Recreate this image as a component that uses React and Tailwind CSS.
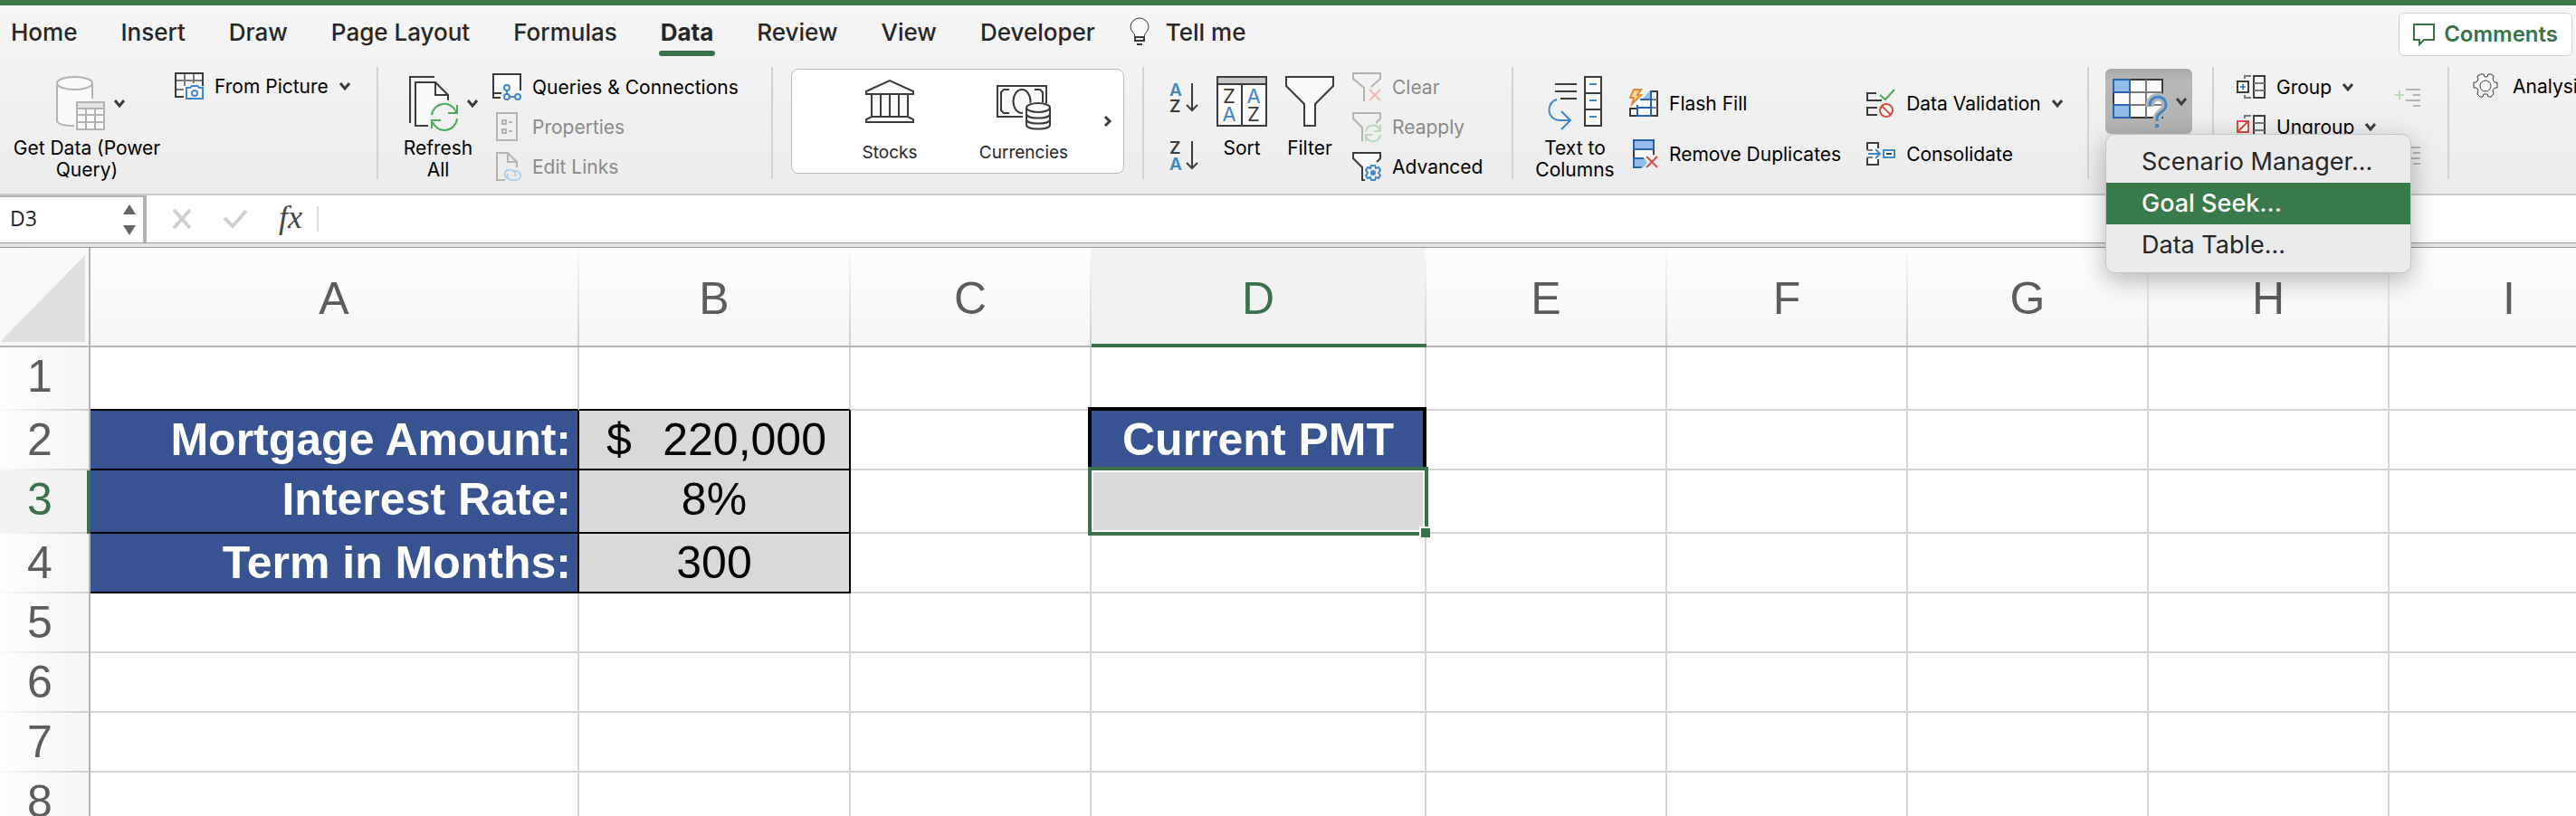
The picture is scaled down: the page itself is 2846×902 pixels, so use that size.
import React from "react";

const INK = "#3b3b3b";
const BLUE = "#3f87c9";
const DEEP = "#2a62ad";
const SKY = "#92bde8";
const GREEN = "#4fa85c";
const RED = "#d94c44";
const MUTE = "#b3b3b1";
const PAPER = "#fafafa";

function Svg({ w, h, children, stroke = INK, className = "" }) {
  return (
    <svg
      width={w}
      height={h}
      viewBox={`0 0 ${w} ${h}`}
      fill="none"
      stroke={stroke}
      strokeWidth="2"
      aria-hidden="true"
      className={`block shrink-0 overflow-visible ${className}`}
    >
      {children}
    </svg>
  );
}

function Chevron() {
  return (
    <Svg w={12} h={10}>
      <path d="M1 2l5 6 5-6" strokeWidth="3" />
    </Svg>
  );
}

/* ---------- icons ---------- */

const DatabaseIcon = () => (
  <Svg w={54} h={60} stroke={MUTE}>
    <path d="M1 8v41c0 4 8 6 19 6h2V28h18V8z" fill={PAPER} stroke="none" />
    <ellipse cx="20.500" cy="8" rx="19.500" ry="7" fill={PAPER} />
    <path d="M1 8v41c0 4 8 6 19 6M40 8v17" />
    <path d="M23 29h30v30H23z" fill={PAPER} />
    <path d="M23 29h30v7H23z" fill="#e3e3e1" />
    <path d="M23 43h30M23 51h30M33 36v23M43 36v23" />
  </Svg>
);

const FromPictureIcon = () => (
  <Svg w={32} h={30}>
    <path d="M1 1h30v26H1z" fill={PAPER} stroke="none" />
    <path d="M1 9h30M11 1v14M21 1v11M1 19h9" stroke="#7a7a78" />
    <path d="M10 27H1V1h30v14" />
    <path d="M13 17h4l2-2h6l2 2h4v12H13z" fill={PAPER} stroke={BLUE} />
    <circle cx="22" cy="23" r="3" stroke={BLUE} />
  </Svg>
);

const RefreshIcon = () => (
  <Svg w={54} h={60}>
    <path d="M1 52V1h27" />
    <path d="M7 7h22l14 14v34H7z" fill={PAPER} stroke="none" />
    <path d="M21 55H7V7h22l14 14v6M29 7v14h14" />
    <circle cx="39" cy="45" r="17" fill="#f1f1f1" stroke="none" />
    <path d="M25 43a14 14 0 0 1 27-3M53 47a14 14 0 0 1-27 4" stroke={GREEN} />
    <path d="M53 32v9H43M25 58v-9h10" stroke={GREEN} />
  </Svg>
);

const QueriesIcon = () => (
  <Svg w={32} h={30}>
    <path d="M1 1h30v20H11v6H1z" fill={PAPER} stroke="none" />
    <path d="M9 27H1V1h30v18M1 22h9" />
    <path d="M16 19v4M19 26h6" stroke={BLUE} />
    <circle cx="16" cy="16" r="3" stroke={BLUE} fill={PAPER} />
    <circle cx="16" cy="26" r="3" stroke={BLUE} fill={PAPER} />
    <circle cx="28" cy="26" r="3" stroke={BLUE} fill={PAPER} />
  </Svg>
);

const PropertiesIcon = () => (
  <Svg w={24} h={32} stroke={MUTE} className="mx-1">
    <path d="M1 1h22v30H1zM7 9h4v4H7zM7 19h4v4H7zM14 11h4M14 21h4" />
  </Svg>
);

const EditLinksIcon = () => (
  <Svg w={28} h={32} stroke={MUTE} className="ml-1">
    <path d="M10 31H1V1h12l10 10v6M13 1v10h10" />
    <path
      d="M14 29h-1.500a5 5 0 0 1 0-9H17a5 5 0 0 1 4 7M19 21h3a5 5 0 0 1 0 10h-5a5 5 0 0 1-4-7"
      stroke="#b3cfea"
    />
  </Svg>
);

const StocksIcon = () => (
  <Svg w={54} h={48}>
    <path d="M7 17h40v23H7z" fill={PAPER} stroke="none" />
    <path d="M1 16v-3L27 1l26 12v3z" fill={PAPER} />
    <path d="M7 17v23M17 17v23M27 17v23M37 17v23M47 17v23" />
    <path d="M7 41h40l6 3v3H1v-3z" fill={PAPER} />
  </Svg>
);

const CurrenciesIcon = () => (
  <Svg w={60} h={50}>
    <path d="M1 1h54v34H1z" fill={PAPER} />
    <path d="M14 5H8L5 8v20l3 3h6M42 5h6l3 3v12" />
    <ellipse cx="28" cy="18" rx="9.500" ry="13" />
    <path d="M29 50V25c0-8 32-8 32 0v25z" fill="#fff" stroke="none" />
    <path d="M33 25v19c0 6 26 6 26 0V25" fill={PAPER} />
    <ellipse cx="46" cy="25" rx="13" ry="5" fill={PAPER} />
    <path d="M33 32c0 6 26 6 26 0M33 38c0 6 26 6 26 0" />
  </Svg>
);

function SortArrowIcon({ top, bottom }) {
  const color = (c) => (c === "A" ? BLUE : INK);
  return (
    <Svg w={32} h={32}>
      <g stroke="none" fontFamily="Inter, sans-serif" fontSize="19" fontWeight="600">
        <text x="0" y="14" fill={color(top)}>{top}</text>
        <text x="0" y="32" fill={color(bottom)}>{bottom}</text>
      </g>
      <path d="M25 0v30M19 24l6 6 6-6" />
    </Svg>
  );
}

const SortIcon = () => (
  <Svg w={56} h={56}>
    <path d="M1 1h54v54H1z" fill={PAPER} />
    <path d="M1 1h54v8H1z" fill="#c6c6c4" />
    <path d="M28 9v46" />
    <g stroke="none" fontFamily="Inter, sans-serif" fontSize="22" textAnchor="middle">
      <text x="14" y="30" fill={INK}>Z</text>
      <text x="41" y="30" fill={BLUE}>A</text>
      <text x="14" y="50" fill={BLUE}>A</text>
      <text x="41" y="50" fill={INK}>Z</text>
    </g>
  </Svg>
);

const FilterIcon = () => (
  <Svg w={54} h={56}>
    <path d="M1 1h52v10L33 31v24H21V31L1 11z" fill={PAPER} />
  </Svg>
);

const ClearIcon = () => (
  <Svg w={32} h={32} stroke={MUTE}>
    <path d="M13 32V17L1 7V1h30v6L21 16" />
    <path d="M19 19l12 12M31 19L19 31" stroke="#eeb9b5" />
  </Svg>
);

const ReapplyIcon = () => (
  <Svg w={32} h={32} stroke={MUTE}>
    <path d="M11 32V17L1 7V1h30v6l-5 5" />
    <path
      d="M15 21a8 8 0 0 1 15-2M31 25a8 8 0 0 1-15 3M31 14v7h-7M15 32v-7h7"
      stroke="#b5d9b9"
    />
  </Svg>
);

const AdvancedIcon = () => (
  <Svg w={32} h={32}>
    <path d="M1 1h30v6l-10 9-7 15h-3V17L1 7z" fill={PAPER} stroke="none" />
    <path d="M14 31h-3V17L1 7V1h30v6l-4 4" />
    <path
      d="M21 15h4l1 3 3-1 2 3-2 3 2 3-2 3-3-1-1 3h-4l-1-3-3 1-2-3 2-3-2-3 2-3 3 1z"
      fill="#f0f0f0"
      stroke={BLUE}
    />
    <circle cx="23" cy="23" r="2" fill={BLUE} stroke={BLUE} />
  </Svg>
);

const TextToColumnsIcon = () => (
  <Svg w={60} h={60}>
    <path d="M8 9h24M8 17h24M14 25h18" />
    <path d="M41 1h18v54H41z" fill={PAPER} />
    <path d="M41 19h18M41 37h18" />
    <path d="M46 9h8M46 27h8M46 45h8" stroke={BLUE} />
    <path d="M10 26C-2 29-2 49 14 49h11M15 39l10 10-10 10" stroke={BLUE} />
  </Svg>
);

const FlashFillIcon = () => (
  <Svg w={32} h={32}>
    <path d="M1 22h8v8H1zM24 3h7v27h-7z" fill={PAPER} />
    <path d="M24 12h7M24 21h7" stroke="#7a7a78" />
    <path d="M9 12h15v17H9z" fill={PAPER} stroke="none" />
    <path d="M23 2v10h-9z" fill={SKY} stroke="none" />
    <path d="M12 12h12M9 21h15M24 3v27H9V18M23 3h1" stroke={DEEP} />
    <path d="M5 1h8l-4 6h4L3 17l2-7H1z" fill="#f8dc8c" stroke="#e08a3c" />
  </Svg>
);

const RemoveDuplicatesIcon = () => (
  <Svg w={28} h={32} className="ml-1">
    <path d="M1 11h22v10H1z" fill={PAPER} stroke="none" />
    <path d="M1 12v9M23 12v5" />
    <path d="M1 1h22v10H1z" fill={SKY} stroke={DEEP} />
    <path d="M10 31H1V21h12l3 5-4 5z" fill={SKY} stroke="none" />
    <path d="M10 31H1V21h11" stroke={DEEP} />
    <path d="M15 19l12 12M27 19L15 31" stroke={RED} />
  </Svg>
);

const DataValidationIcon = () => (
  <Svg w={32} h={32}>
    <path d="M11 5H1v8h16M12 21H1v8h11" />
    <path d="M15 7l6 5L31 1" stroke={GREEN} />
    <circle cx="22" cy="24" r="7" stroke={RED} fill={PAPER} />
    <path d="M17 19l10 10" stroke={RED} />
  </Svg>
);

const ConsolidateIcon = () => (
  <Svg w={32} h={26}>
    <path d="M1 1h12v24H1z" fill={PAPER} stroke="none" />
    <path d="M1 9V1h12v6M1 17v8h12v-6" />
    <path d="M1 9h6M1 17h6" stroke="#7a7a78" />
    <path d="M2 13h13M10 8l5 5-5 5" stroke={BLUE} />
    <path d="M19 9h12v8H19z" fill={PAPER} stroke={BLUE} />
    <path d="M22 13h6" />
  </Svg>
);

const WhatIfIcon = () => (
  <Svg w={60} h={54}>
    <path d="M1 1h54v42H1z" fill={PAPER} />
    <path d="M19 15h36M1 29h54M19 1v42M37 1v42" stroke="#7a7a78" />
    <path d="M1 1h18v14H1zM1 29h18v14H1z" fill={SKY} stroke={DEEP} />
    <path d="M41 31c0-14 18-14 18-2 0 8-10 8-10 16v3" stroke="#b6b6b6" strokeWidth="9" />
    <path d="M41 30c0-13 18-13 18-1 0 8-10 8-10 15v3" stroke={BLUE} strokeWidth="3" />
    <path d="M47 50h4v4h-4z" fill={BLUE} stroke="none" />
  </Svg>
);

const GroupIcon = () => (
  <Svg w={32} h={26}>
    <path d="M19 1h12v24H19z" fill={PAPER} />
    <path d="M19 9h12M19 17h12M9 4V1h7M9 22v3h7" stroke="#7a7a78" />
    <path d="M1 7h12v12H1z" fill={PAPER} />
    <path d="M4 13h6M7 10v6" stroke={BLUE} />
  </Svg>
);

const UngroupIcon = () => (
  <Svg w={32} h={26}>
    <path d="M19 1h12v24H19z" fill={PAPER} />
    <path d="M19 9h12M19 17h12M9 4V1h7M9 22v3h7" stroke="#7a7a78" />
    <path d="M1 7h12v12H1zM2 18L12 8" fill={PAPER} stroke={RED} />
  </Svg>
);

function DetailIcon({ plus }) {
  return (
    <Svg w={28} h={20} stroke={MUTE}>
      <path d="M12 1h16M20 7h8M12 13h16M20 19h8" />
      <path d={plus ? "M0 7h10M5 2v10" : "M0 7h10"} stroke="#b5d9b9" />
    </Svg>
  );
}

const GearIcon = () => (
  <Svg w={28} h={28}>
    <path
      d="M9 1h3l1 3h3l1-3h3l3 2-1 4 2 3h3v6h-3l-2 3 1 4-3 3h-3l-1-3h-4l-1 3H8l-3-3 1-4-2-3H1v-6h3l2-3-1-4z"
      strokeWidth="1"
      fill={PAPER}
    />
    <circle cx="14" cy="14" r="6" strokeWidth="1" />
  </Svg>
);

const BulbIcon = () => (
  <Svg w={22} h={30}>
    <path d="M6 21c0-5-5-6-5-11a10 10 0 0 1 20 0c0 5-5 6-5 11z" fill={PAPER} strokeWidth="1" />
    <path d="M6 21v4h10v-4zM8 29h6" />
  </Svg>
);

const CommentIcon = () => (
  <Svg w={24} h={24} stroke="#3a7148">
    <path d="M1 1h22v17H12l-5 5v-5H1z" />
  </Svg>
);

/* ---------- ribbon ---------- */

const TABS = ["Home", "Insert", "Draw", "Page Layout", "Formulas", "Data", "Review", "View", "Developer"];

function Tab({ label, active }) {
  return (
    <button
      type="button"
      role="tab"
      aria-selected={active}
      className={`relative flex h-14 items-center px-0.5 pt-0.5 whitespace-nowrap ${active ? "font-bold" : "font-medium"}`}
    >
      {label}
      {active && <span className="absolute inset-x-0 bottom-0 h-1.5 rounded-full bg-[#3a704a]" />}
    </button>
  );
}

function Group({ className = "", children }) {
  return (
    <div className={`flex h-[124px] shrink-0 items-start border-r-2 border-[#d2d2d2] ${className}`}>
      {children}
    </div>
  );
}

function BigButton({ icon, lines, className = "", rowClass = "", menu }) {
  return (
    <button type="button" className={`flex shrink-0 flex-col items-center gap-2 pt-2.5 leading-6 ${className}`}>
      <span className={`flex items-center gap-2.5 ${rowClass}`}>
        {icon}
        {menu && <Chevron />}
      </span>
      <span className="whitespace-nowrap">
        {lines.map((line) => (
          <span key={line} className="block">{line}</span>
        ))}
      </span>
    </button>
  );
}

function RowButton({ icon, label, menu, disabled, className = "h-11" }) {
  return (
    <button
      type="button"
      disabled={disabled}
      className={`flex items-center gap-3 whitespace-nowrap ${disabled ? "text-[#8a8a8a]" : ""} ${className}`}
    >
      <span className="flex w-8 shrink-0 items-center">{icon}</span>
      <span className="pt-0.5">{label}</span>
      {menu && <Chevron />}
    </button>
  );
}

const MENU_ITEMS = ["Scenario Manager...", "Goal Seek...", "Data Table..."];

function WhatIfMenu() {
  return (
    <div
      role="menu"
      className="absolute top-full left-0 z-30 flex w-[338px] flex-col rounded-[10px] border border-[#c4c4c4] bg-[#ebebeb] py-[7px] text-[27px] text-[#262626] shadow-[0_8px_28px_rgba(0,0,0,0.28)]"
    >
      {MENU_ITEMS.map((item) => (
        <button
          key={item}
          type="button"
          role="menuitem"
          className={`h-[46px] pl-[39px] text-left ${item === "Goal Seek..." ? "bg-[#387a49] font-medium text-white" : ""}`}
        >
          {item}
        </button>
      ))}
    </div>
  );
}

function Ribbon() {
  return (
    <header className="border-b-2 border-[#c8c8c8] bg-linear-to-b from-[#f6f6f6] to-[#ececec] pb-4">
      <div className="h-1.5 bg-[#387a49]" />
      <div className="flex h-[68px] items-start justify-between border-t-2 border-white/70 pr-1 pl-2.5">
        <div role="tablist" className="-mt-0.5 flex gap-11 text-[26px] text-[#262626]">
          {TABS.map((tab) => (
            <Tab key={tab} label={tab} active={tab === "Data"} />
          ))}
          <button type="button" className="-ml-2 flex h-14 items-center gap-[18px] pt-0.5 font-medium whitespace-nowrap">
            <BulbIcon />
            Tell me
          </button>
        </div>
        <button
          type="button"
          className="mt-1.5 flex h-12 items-center gap-2.5 rounded-md border border-[#d0d0d0] bg-white px-[15px] text-[24px] font-semibold text-[#3a7148]"
        >
          <CommentIcon />
          Comments
        </button>
      </div>

      <div className="flex items-start text-[21px] text-black">
        <Group className="w-[418px]">
          <BigButton
            icon={<DatabaseIcon />}
            lines={["Get Data (Power", "Query)"]}
            menu
            className="ml-2.5 w-[172px]"
            rowClass="pl-2"
          />
          <div className="pt-[5px] pl-[11px]">
            <RowButton icon={<FromPictureIcon />} label="From Picture" menu className="h-8" />
          </div>
        </Group>

        <Group className="w-[436px]">
          <BigButton
            icon={<RefreshIcon />}
            lines={["Refresh", "All"]}
            menu
            className="ml-[22px] w-[88px]"
            rowClass="self-end"
          />
          <div className="flex flex-col pl-4">
            <RowButton icon={<QueriesIcon />} label="Queries & Connections" />
            <RowButton icon={<PropertiesIcon />} label="Properties" disabled />
            <RowButton icon={<EditLinksIcon />} label="Edit Links" disabled />
          </div>
        </Group>

        <Group className="w-[410px] px-5">
          <div className="mt-0.5 flex h-[116px] w-full rounded-lg border border-[#b8b8b8] bg-white pl-[34px] text-[19px] text-[#262626]">
            <button type="button" className="flex w-[148px] flex-col items-center justify-between pt-[11px] pb-2.5 leading-6">
              <StocksIcon />
              Stocks
            </button>
            <button type="button" className="flex w-[148px] flex-col items-center justify-between pt-[17px] pb-2.5 leading-6">
              <CurrenciesIcon />
              Currencies
            </button>
            <button type="button" aria-label="More data types" className="flex flex-1 items-center justify-center">
              <Svg w={9} h={12}>
                <path d="M2 1l5 5-5 5" strokeWidth="3" />
              </Svg>
            </button>
          </div>
        </Group>

        <Group className="w-[408px] pl-7">
          <div className="flex flex-col gap-8 pt-[18px]">
            <button type="button" aria-label="Sort ascending">
              <SortArrowIcon top="A" bottom="Z" />
            </button>
            <button type="button" aria-label="Sort descending">
              <SortArrowIcon top="Z" bottom="A" />
            </button>
          </div>
          <BigButton icon={<SortIcon />} lines={["Sort"]} className="ml-4 w-16 gap-3" />
          <BigButton icon={<FilterIcon />} lines={["Filter"]} className="ml-2 w-[70px] gap-3" />
          <div className="flex flex-col pl-3">
            <RowButton icon={<ClearIcon />} label="Clear" disabled />
            <RowButton icon={<ReapplyIcon />} label="Reapply" disabled />
            <RowButton icon={<AdvancedIcon />} label="Advanced" />
          </div>
        </Group>

        <Group className="w-[636px]">
          <BigButton icon={<TextToColumnsIcon />} lines={["Text to", "Columns"]} className="ml-6 w-[88px]" />
          <div className="flex flex-col pt-3 pl-4">
            <RowButton icon={<FlashFillIcon />} label="Flash Fill" className="h-14" />
            <RowButton icon={<RemoveDuplicatesIcon />} label="Remove Duplicates" className="h-14" />
          </div>
          <div className="flex flex-col pt-3 pl-7">
            <RowButton icon={<DataValidationIcon />} label="Data Validation" menu className="h-14" />
            <RowButton icon={<ConsolidateIcon />} label="Consolidate" className="h-14" />
          </div>
        </Group>

        <Group className="w-[138px] pl-[18px]">
          <div className="relative mt-0.5">
            <button
              type="button"
              aria-label="What-If Analysis"
              aria-expanded="true"
              className="flex h-[72px] w-24 items-center gap-2.5 rounded-md bg-linear-to-b from-[#a9a9a9] via-[#b8b8b8] via-20% to-[#b3b3b3] pl-2"
            >
              <span className="pt-1">
                <WhatIfIcon />
              </span>
              <Chevron />
            </button>
            <WhatIfMenu />
          </div>
        </Group>

        <Group className="w-[260px] justify-between pr-[30px] pl-[25px]">
          <div className="flex flex-col">
            <RowButton icon={<GroupIcon />} label="Group" menu />
            <RowButton icon={<UngroupIcon />} label="Ungroup" menu />
          </div>
          <div className="flex flex-col gap-11 pt-6">
            <button type="button" aria-label="Show detail">
              <DetailIcon plus />
            </button>
            <button type="button" aria-label="Hide detail">
              <DetailIcon />
            </button>
          </div>
        </Group>

        <div className="pt-[5px] pl-[26px]">
          <RowButton icon={<GearIcon />} label="Analysis Tools" className="h-8" />
        </div>
      </div>
    </header>
  );
}

/* ---------- formula bar ---------- */

function FormulaBar() {
  return (
    <div>
      <div className="flex h-[52px] items-stretch bg-white">
        <div className="flex w-[162px] shrink-0 items-center border-t-2 border-r-4 border-[#b4b4b4] bg-white pr-2 pl-[11px]">
          <input
            aria-label="Name box"
            defaultValue="D3"
            className="w-full min-w-0 bg-transparent pb-1 font-['Open_Sans',sans-serif] text-[23px] text-[#222] outline-none"
          />
          <span className="flex flex-col gap-3">
            <button type="button" aria-label="Previous name">
              <Svg w={14} h={11}><path d="M7 0l7 11H0z" fill="#666" stroke="none" /></Svg>
            </button>
            <button type="button" aria-label="Next name">
              <Svg w={14} h={11}><path d="M7 11L0 0h14z" fill="#666" stroke="none" /></Svg>
            </button>
          </span>
        </div>
        <div className="flex items-center gap-[34px] pl-7">
          <button type="button" aria-label="Cancel">
            <Svg w={22} h={22} stroke="#cfcfcf"><path d="M2 1l18 20M20 1L2 21" strokeWidth="4" /></Svg>
          </button>
          <button type="button" aria-label="Enter">
            <Svg w={28} h={22} stroke="#cfcfcf"><path d="M2 10l9 9L26 2" strokeWidth="4" /></Svg>
          </button>
          <button
            type="button"
            aria-label="Insert function"
            className="pb-1 font-['Liberation_Serif',serif] text-[36px] leading-none text-[#444] italic"
          >
            fx
          </button>
        </div>
        <input
          aria-label="Formula"
          className="my-3 ml-4 min-w-0 flex-1 border-l-2 border-[#dedede] bg-white px-4 text-[24px] outline-none"
        />
      </div>
      <div className="h-1.5 border-y border-[#999] bg-[#e4e4e4]" />
    </div>
  );
}

/* ---------- sheet ---------- */

const COLUMNS = [
  { name: "A", width: "w-[540px]" },
  { name: "B", width: "w-[300px]" },
  { name: "C", width: "w-[266px]" },
  { name: "D", width: "w-[370px]" },
  { name: "E", width: "w-[266px]" },
  { name: "F", width: "w-[266px]" },
  { name: "G", width: "w-[266px]" },
  { name: "H", width: "w-[266px]" },
  { name: "I", width: "w-[266px]" },
];

const ROWS = [1, 2, 3, 4, 5, 6, 7, 8];
const LABELS = { 2: "Mortgage Amount:", 3: "Interest Rate:", 4: "Term in Months:" };
const VALUES = { 3: "8%", 4: "300" };

function Cell({ col, row }) {
  const base = "border-r-2 border-b-2 p-0 align-top";
  if (col === "A" && LABELS[row]) {
    return (
      <td className={`${base} border-black bg-[#375391] pr-[7px] text-right font-bold text-white`}>{LABELS[row]}</td>
    );
  }
  if (col === "B" && row === 2) {
    return (
      <td className={`${base} border-black bg-[#d9d9d9] text-black`}>
        <span className="flex justify-between pr-[25px] pl-[30px]">
          <span>$</span>
          <span>220,000</span>
        </span>
      </td>
    );
  }
  if (col === "B" && VALUES[row]) {
    return <td className={`${base} border-black bg-[#d9d9d9] text-center text-black`}>{VALUES[row]}</td>;
  }
  if (col === "D" && row === 2) {
    return (
      <td className={`${base} relative border-black bg-[#375391] text-center font-bold text-white`}>
        <span className="absolute -top-1 -right-0.5 bottom-0 -left-1 border-4 border-b-0 border-black" />
        Current PMT
      </td>
    );
  }
  if (col === "D" && row === 3) {
    return (
      <td aria-selected="true" className={`${base} relative border-[#d4d4d4] bg-[#d9d9d9]`}>
        <span className="absolute -inset-1 z-10 border-4 border-[#3a704a] shadow-[inset_0_0_0_2px_white]">
          <span className="absolute -right-1.5 -bottom-1.5 size-3 border-t-2 border-l-2 border-white bg-[#3a704a]" />
        </span>
      </td>
    );
  }
  const overTable = row === 1 && (col === "A" || col === "B");
  return (
    <td className={`${base} border-r-[#d4d4d4] ${overTable ? "border-b-black" : "border-b-[#d4d4d4]"}`} />
  );
}

function Sheet() {
  return (
    <table className="w-[2906px] table-fixed border-separate border-spacing-0 bg-white font-['Liberation_Sans',Arial,sans-serif] text-[50px] leading-[64px]">
      <thead>
        <tr className="h-[110px] text-[#5c5c5c]">
          <th className="w-[100px] border-r-2 border-b-2 border-[#b5b5b5] bg-linear-to-br from-[#fafafa] to-[#f6f6f6] p-0 align-bottom">
            <button type="button" aria-label="Select all" className="mb-1 block">
              <Svg w={94} h={96}><path d="M94 0v96H0z" fill="#dfdfdf" stroke="none" /></Svg>
            </button>
          </th>
          {COLUMNS.map(({ name, width }) => (
            <th
              key={name}
              scope="col"
              className={`${width} p-0 font-normal ${
                name === "D"
                  ? "border-b-4 border-[#3a704a] bg-[#f2f2f2] text-[#3a704a]"
                  : "border-b-2 border-[#b5b5b5] bg-linear-to-b from-[#fdfdfd] to-[#f6f6f6]"
              }`}
            >
              <span className={`flex items-center ${name === "D" ? "h-[106px] pt-0.5" : "h-[108px]"}`}>
                <span className="flex-1 pt-1 text-center">{name}</span>
                <span className="w-0.5 self-stretch bg-linear-to-b from-[#fafafa] to-[#cfcfcf]" />
              </span>
            </th>
          ))}
        </tr>
      </thead>
      <tbody>
        {ROWS.map((row) => (
          <tr key={row} className={row === 1 || row === 3 ? "h-[70px]" : "h-[66px]"}>
            <th
              scope="row"
              className={`p-0 align-top font-normal ${
                row === 3
                  ? "border-r-4 border-[#3a704a] bg-[#f2f2f2] text-[#3a704a]"
                  : "border-r-2 border-[#b5b5b5] bg-linear-to-r from-[#fdfdfd] to-[#f6f6f6] text-[#5c5c5c]"
              }`}
            >
              <span className={`flex flex-col ${row === 1 || row === 3 ? "h-[70px]" : "h-[66px]"}`}>
                <span className={`flex-1 ${row === 3 ? "pr-2" : "pr-2.5"}`}>{row}</span>
                <span className="h-0.5 bg-linear-to-r from-[#fafafa] to-[#cfcfcf]" />
              </span>
            </th>
            {COLUMNS.map(({ name }) => (
              <Cell key={name} col={name} row={row} />
            ))}
          </tr>
        ))}
      </tbody>
    </table>
  );
}

export default function App() {
  return (
    <div className="flex h-screen flex-col overflow-hidden bg-white font-['Inter',sans-serif]">
      <Ribbon />
      <FormulaBar />
      <main className="min-h-0 flex-1 overflow-hidden">
        <Sheet />
      </main>
    </div>
  );
}
